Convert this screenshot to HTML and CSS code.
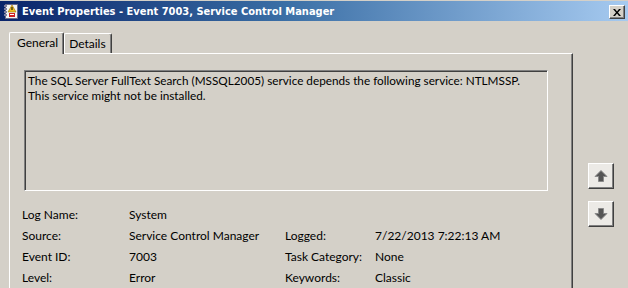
FILE: index.html
```html
<!DOCTYPE html>
<html>
<head>
<meta charset="utf-8">
<link rel="stylesheet" href="styles.css">
</head>
<body>
<div class="window">
  <div class="titlebar">
    <svg class="appicon" width="16" height="16" viewBox="0 0 16 16">
      <rect x="2.5" y="1.5" width="12" height="14" fill="#f4f4f4" stroke="#6a6a8a"/>
      <rect x="1" y="2" width="3" height="2" fill="#8080a0"/>
      <rect x="1" y="5" width="3" height="2" fill="#8080a0"/>
      <rect x="1" y="8" width="3" height="2" fill="#8080a0"/>
      <rect x="1" y="11" width="3" height="2" fill="#8080a0"/>
      <path d="M9 2 L13 9 L5 9 Z" fill="#f0c020" stroke="#a07000" stroke-width="0.6"/>
      <rect x="8.5" y="4" width="1" height="3" fill="#000"/>
      <rect x="6" y="10" width="6" height="4" fill="#d02020"/>
      <rect x="7" y="11" width="4" height="1" fill="#fff"/>
    </svg>
    <span class="title">Event Properties - Event 7003, Service Control Manager</span>
    <div class="closebtn">
      <svg width="8" height="7" viewBox="0 0 8 7"><path d="M0 0h2l2 2.5 2-2.5h2l-3 3.5 3 3.5h-2l-2-2.5-2 2.5h-2l3-3.5z" fill="#000"/></svg>
    </div>
  </div>
  <div class="main">
    <div class="leftcol">
      <div class="tabs">
        <div class="tab active">General</div>
        <div class="tab">Details</div>
      </div>
      <div class="panel">
        <div class="message">The SQL Server FullText Search (MSSQL2005) service depends the following service: NTLMSSP.<br>This service might not be installed.</div>
        <div class="fields">
          <div class="lbl">Log Name:</div><div class="val">System</div><div></div><div></div>
          <div class="lbl">Source:</div><div class="val">Service Control Manager</div><div class="lbl">Logged:</div><div class="val">7/22/2013 7:22:13 AM</div>
          <div class="lbl">Event ID:</div><div class="val">7003</div><div class="lbl">Task Category:</div><div class="val">None</div>
          <div class="lbl">Level:</div><div class="val">Error</div><div class="lbl">Keywords:</div><div class="val">Classic</div>
        </div>
      </div>
    </div>
    <div class="sidecol">
      <div class="navbtn">
        <svg width="14" height="14" viewBox="0 0 14 14"><path d="M7 1.5 L13 7.5 L9.5 7.5 L9.5 12.5 L4.5 12.5 L4.5 7.5 L1 7.5 Z" fill="#555" stroke="#8a8a8a" stroke-width="1"/></svg>
      </div>
      <div class="navbtn">
        <svg width="14" height="14" viewBox="0 0 14 14"><path d="M7 12.5 L13 6.5 L9.5 6.5 L9.5 1.5 L4.5 1.5 L4.5 6.5 L1 6.5 Z" fill="#555" stroke="#8a8a8a" stroke-width="1"/></svg>
      </div>
    </div>
  </div>
</div>
</body>
</html>
```
FILE: styles.css
```css
html, body {
  margin: 0;
  padding: 0;
}
body {
  width: 628px;
  height: 288px;
  overflow: hidden;
  background: #d4d0c8;
  font-family: "Lato", "Open Sans", sans-serif;
  font-size: 12px;
  color: #000;
}
.window {
  padding-top: 1px;
}
.titlebar {
  height: 20px;
  display: flex;
  align-items: center;
  background: linear-gradient(to right, #0a246a 0%, #3a6ea5 45%, #a6caf0 100%);
  padding-left: 3px;
  padding-right: 3px;
}
.appicon {
  flex: none;
  margin-right: 3px;
}
.title {
  flex: 1;
  color: #fff;
  font-family: "DejaVu Sans Condensed", "DejaVu Sans", sans-serif;
  font-weight: bold;
  font-size: 11px;
  white-space: nowrap;
}
.closebtn {
  width: 14px;
  height: 12px;
  background: #d4d0c8;
  border-top: 1px solid #fff;
  border-left: 1px solid #fff;
  border-right: 1px solid #404040;
  border-bottom: 1px solid #404040;
  box-shadow: inset -1px -1px 0 #808080;
  display: flex;
  align-items: center;
  justify-content: center;
  margin-top: 2px;
}
.main {
  display: flex;
}
.leftcol {
  margin-left: 9px;
  width: 564px;
}
.tabs {
  display: flex;
  align-items: flex-end;
  margin-top: 10px;
  height: 22px;
}
.tab {
  height: 19px;
  line-height: 19px;
  padding: 0 5px 0 4px;
  border-top: 1px solid #fff;
  border-left: 1px solid #fff;
  border-right: 1px solid #404040;
  border-radius: 2px 2px 0 0;
  box-shadow: inset -1px 0 0 #808080;
}
.tab.active {
  height: 21px;
  line-height: 19px;
  padding: 0 5px 0 7px;
  position: relative;
  z-index: 1;
  margin-bottom: -1px;
  background: #d4d0c8;
}
.panel {
  height: 235px;
  overflow: hidden;
  border-top: 1px solid #fff;
  border-left: 1px solid #fff;
  border-right: 1px solid #404040;
  box-shadow: inset -1px 0 0 #808080;
  padding: 16px 0 0 14px;
  box-sizing: border-box;
}
.message {
  width: 524px;
  height: 121px;
  box-sizing: border-box;
  border-top: 1px solid #808080;
  border-left: 1px solid #808080;
  border-right: 1px solid #fff;
  border-bottom: 1px solid #fff;
  box-shadow: inset 1px 1px 0 #404040;
  padding: 2px 3px;
  font-size: 11.75px;
  line-height: 15px;
}
.fields {
  display: grid;
  grid-template-columns: 107px 156px 90px auto;
  grid-auto-rows: 21px;
  align-items: center;
  margin-top: 13px;
  margin-left: -2px;
}
.sidecol {
  margin-left: 15px;
  padding-top: 142px;
  display: flex;
  flex-direction: column;
  gap: 12px;
}
.navbtn {
  width: 26px;
  height: 26px;
  box-sizing: border-box;
  border-top: 1px solid #fff;
  border-left: 1px solid #fff;
  border-right: 1px solid #404040;
  border-bottom: 1px solid #404040;
  box-shadow: inset -1px -1px 0 #808080;
  background: #eceae6;
  display: flex;
  align-items: center;
  justify-content: center;
}
```
